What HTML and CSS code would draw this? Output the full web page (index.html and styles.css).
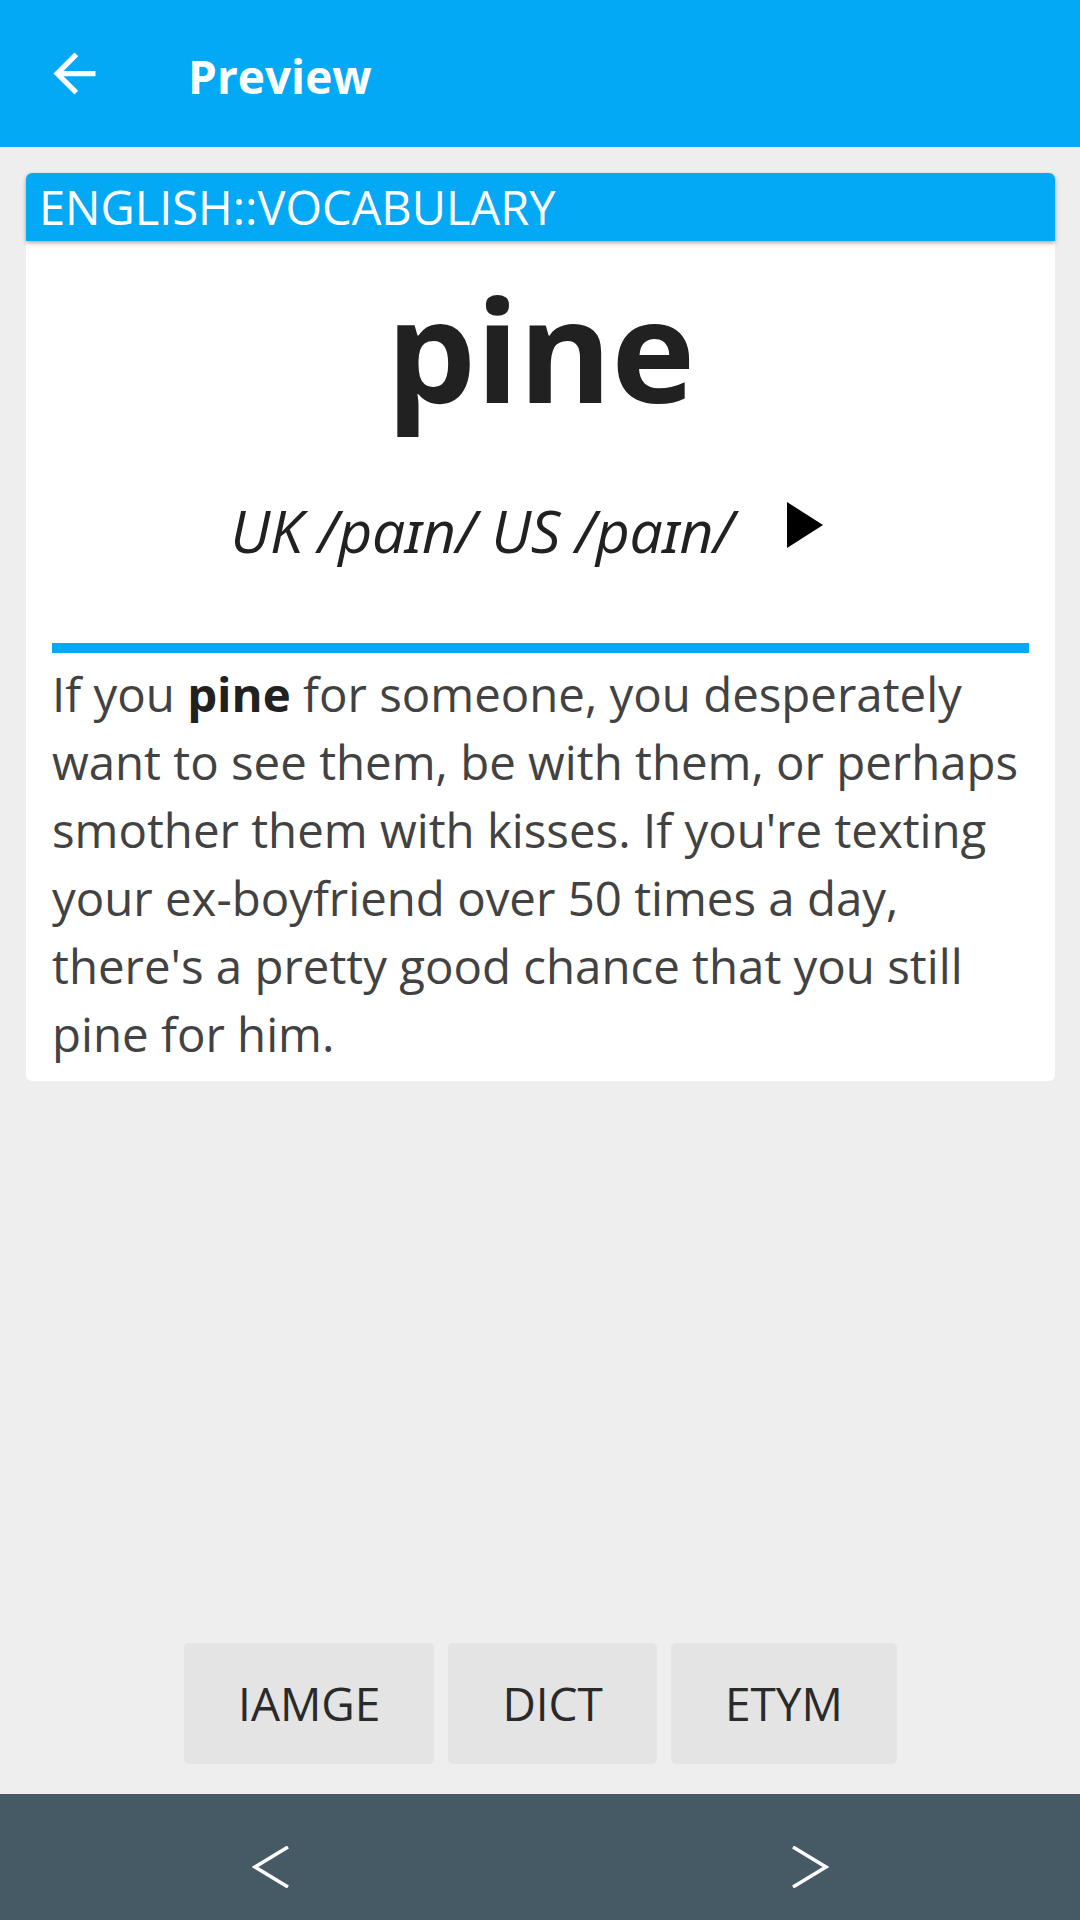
FILE: index.html
```html
<!DOCTYPE html>
<html lang="en">
<head>
<meta charset="utf-8">
<title>Preview</title>
<link rel="stylesheet" href="styles.css">
</head>
<body>
<div class="screen">
  <header class="appbar">
    <div class="back">
      <svg width="63" height="63" viewBox="0 0 24 24"><path fill="#fff" d="M20 11H7.83l5.59-5.59L12 4l-8 8 8 8 1.41-1.41L7.83 13H20v-2z"/></svg>
    </div>
    <div class="title">Preview</div>
  </header>

  <main class="content">
    <section class="card">
      <div class="card-head">ENGLISH::VOCABULARY</div>
      <div class="card-body">
        <div class="word">pine</div>
        <div class="pron-row">
          <span class="pron">UK /paɪn/ US /paɪn/</span>
          <svg class="play" width="36" height="46" viewBox="0 0 36 46"><polygon points="0,0 36,23 0,46" fill="#000"/></svg>
        </div>
        <div class="divider"></div>
        <p class="def">If you <b>pine</b> for someone, you desperately want to see them, be with them, or perhaps smother them with kisses. If you're texting your ex-boyfriend over 50 times a day, there's a pretty good chance that you still pine for him.</p>
      </div>
    </section>

    <div class="spacer"></div>

    <div class="actions">
      <div class="btn">IAMGE</div>
      <div class="btn">DICT</div>
      <div class="btn">ETYM</div>
    </div>
  </main>

  <footer class="navbar">
    <div class="nav-cell">
      <svg width="37" height="42" viewBox="0 0 37 42"><polyline points="36,1 3,21 36,41" fill="none" stroke="#fff" stroke-width="3.5"/></svg>
    </div>
    <div class="nav-cell">
      <svg width="37" height="42" viewBox="0 0 37 42"><polyline points="1,1 34,21 1,41" fill="none" stroke="#fff" stroke-width="3.5"/></svg>
    </div>
  </footer>
</div>
</body>
</html>
```

FILE: styles.css
```css
* { box-sizing: border-box; }
html, body {
  margin: 0;
  padding: 0;
  background: #eeeeee;
}
body {
  font-family: "Open Sans", "Noto Sans", sans-serif;
}
.screen {
  width: 1080px;
  height: 1920px;
  display: flex;
  flex-direction: column;
}
.appbar {
  height: 147px;
  flex: none;
  background: #03a9f4;
  display: flex;
  align-items: center;
}
.back {
  width: 63px;
  height: 63px;
  margin-left: 43px;
  display: flex;
}
.title {
  margin-left: 82px;
  padding-top: 5px;
  color: #fff;
  font-weight: 700;
  font-size: 46px;
}
.content {
  flex: 1;
  display: flex;
  flex-direction: column;
  padding: 26px 25px 30px 26px;
}
.card {
  background: #fff;
  border-radius: 6px;
  display: flex;
  flex-direction: column;
}
.card-head {
  position: relative;
  z-index: 1;
  height: 68px;
  line-height: 68px;
  background: #03a9f4;
  color: #fff;
  font-size: 47px;
  padding-left: 13px;
  border-radius: 6px 6px 0 0;
  box-shadow: 0 2px 4px rgba(0, 0, 0, 0.35);
}
.card-body {
  padding: 0 26px 13px 26px;
  display: flex;
  flex-direction: column;
}
.word {
  margin-top: 27px;
  height: 160px;
  line-height: 160px;
  text-align: center;
  font-size: 142px;
  font-weight: 700;
  color: #212121;
  letter-spacing: -0.5px;
}
.pron-row {
  margin-top: 62px;
  height: 80px;
  display: flex;
  align-items: center;
  justify-content: center;
}
.pron {
  font-style: italic;
  font-size: 59px;
  line-height: 80px;
  color: #212121;
  letter-spacing: -0.3px;
}
.play {
  margin-left: 53px;
  margin-right: 28px;
  margin-top: -10px;
  flex: none;
}
.divider {
  margin-top: 73px;
  height: 10px;
  background: #03a9f4;
}
.def {
  margin: 7px 0 0 0;
  font-size: 47.4px;
  line-height: 68px;
  color: #424242;
}
.def b {
  color: #212121;
  font-weight: 700;
}
.spacer {
  flex: 1;
}
.actions {
  display: flex;
  justify-content: center;
  gap: 14px;
}
.btn {
  height: 121px;
  line-height: 121px;
  padding: 0 54px;
  background: #e4e4e4;
  border-radius: 5px;
  font-size: 46px;
  color: #2a2a2a;
}
.navbar {
  height: 126px;
  flex: none;
  background: #465a65;
  display: flex;
}
.nav-cell {
  flex: 1;
  display: flex;
  align-items: center;
  justify-content: center;
  padding-top: 20px;
}
```
